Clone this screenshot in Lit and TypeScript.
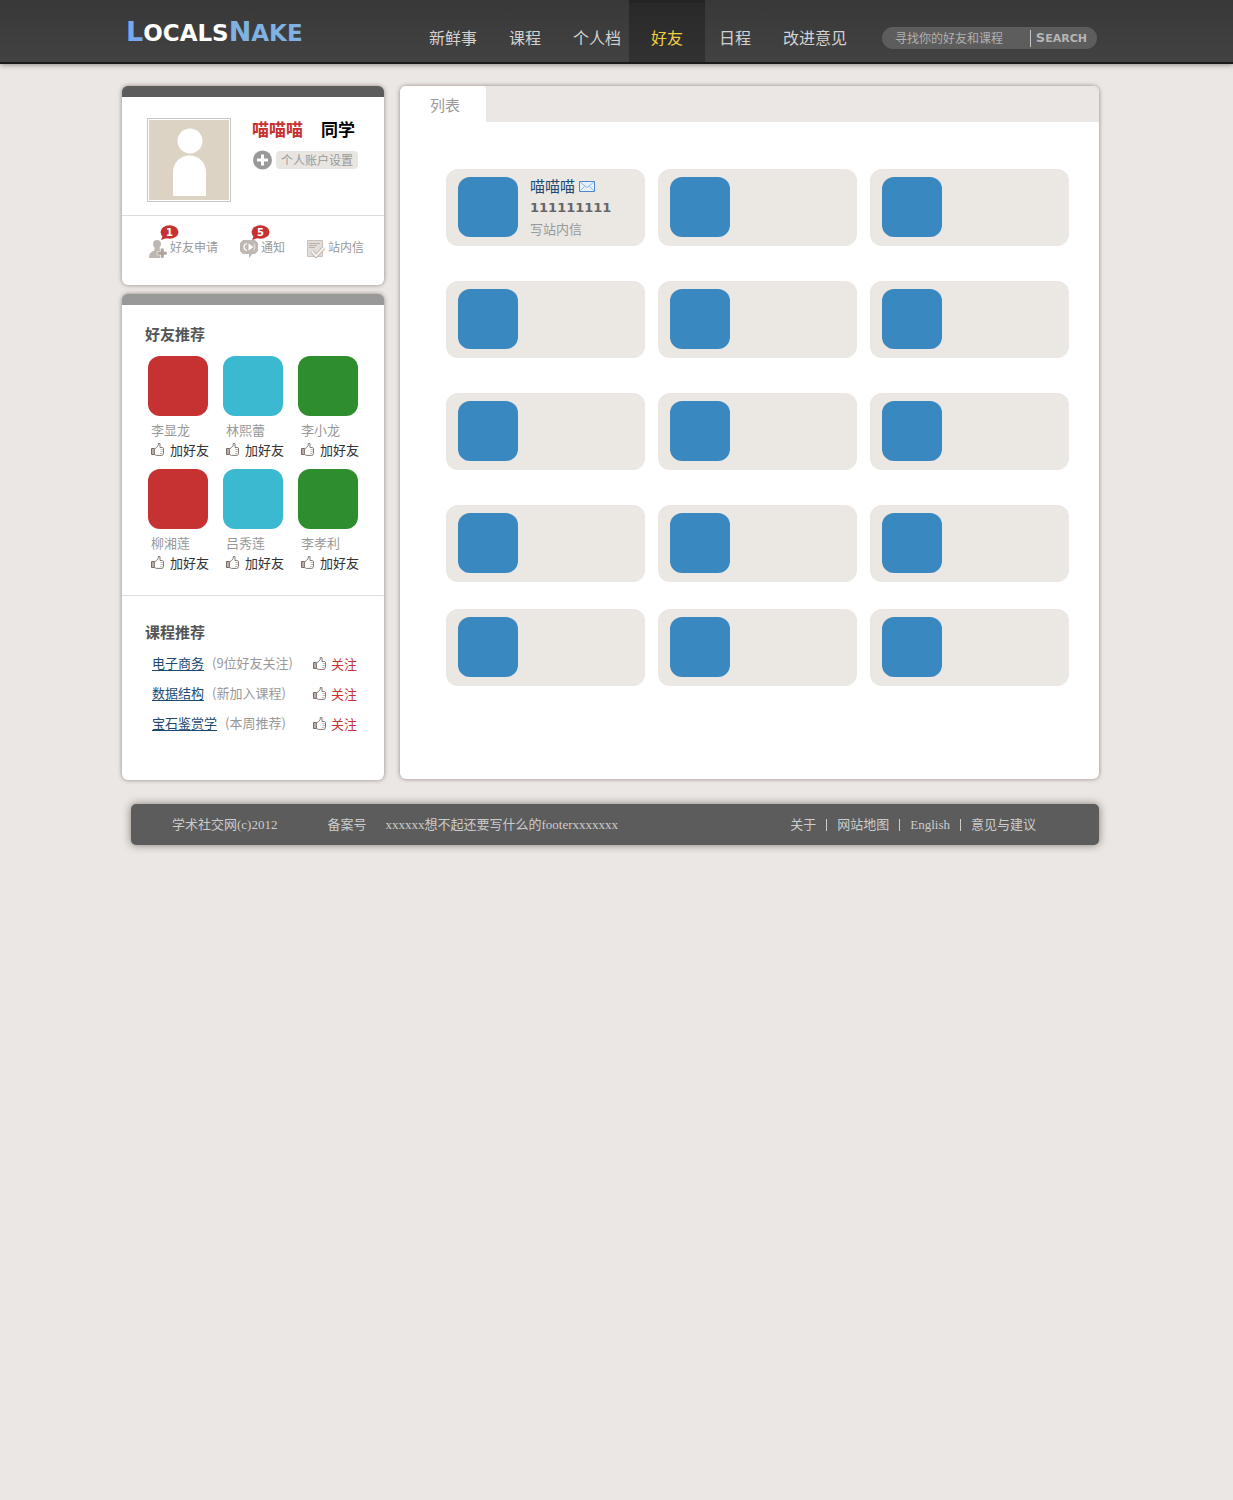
import { LitElement, html, css, svg } from "lit";
import { customElement } from "lit/decorators.js";
import { classMap } from "lit/directives/class-map.js";

const NAV = ["新鲜事", "课程", "个人档", "好友", "日程", "改进意见"];
const ACTIVE = "好友";

const SUGGESTED = [
  { name: "李显龙", tone: "red" },
  { name: "林熙蕾", tone: "cyan" },
  { name: "李小龙", tone: "green" },
  { name: "柳湘莲", tone: "red" },
  { name: "吕秀莲", tone: "cyan" },
  { name: "李孝利", tone: "green" },
];

const COURSES = [
  { name: "电子商务", note: "(9位好友关注)" },
  { name: "数据结构", note: "(新加入课程)" },
  { name: "宝石鉴赏学", note: "(本周推荐)" },
];

const FRIENDS = [
  { name: "喵喵喵", number: "111111111" },
  ...Array.from({ length: 14 }, () => null),
];

const FOOTER_LINKS = ["关于", "网站地图", "English", "意见与建议"];

const thumb = html`<svg class="thumb" width="13" height="13" viewBox="0 0 13 13" aria-hidden="true">
  <path d="M.5 5.500h3v6h-3z" fill="#b9aea8" stroke="#776c68" />
  <path d="M3.500 6 5.500 4.600 7.200 2.500V.6h1.800v3.900h2.600q1 .3.9 1.400v4.600q-.2 1.600-1.600 1.900H5.400L3.500 11.500z" fill="#fff" stroke="#857a75" />
  <path d="M9.500 6.500H12M9.500 8.500H12M9 10.500h2.500" stroke="#c4bcb7" />
</svg>`;

const personIcon = svg`<g>
  <path d="M8 0a4 4 0 0 1 4 4c0 1.500-.8 2.500-1.300 3.500v2c2 .6 2 1 2 1v2.500H10V15h1v3H0c0-3 1-5 2.500-6S5.500 10.500 5.500 9.500v-2C4.600 6.500 4 5.500 4 4a4 4 0 0 1 4-4z" fill="#bfb8b2" />
  <path d="M11.500 8.200h3.500v3.300h3v3.500h-3V18h-3.500v-3H8.200v-3.500h3.300z" fill="#b0a69e" stroke="#fff" stroke-width=".5" />
</g>`;

const noticeIcon = svg`<g>
  <path d="M3 0h12l3 3v8l-3 3h-2.500L9 18v-4H3l-3-3V3z" fill="#bfb8b2" />
  <path d="M7 3.500C4.500 4 4 5.500 4 7s.5 3 3 3.500" fill="none" stroke="#fff" stroke-width="1.200" />
  <path d="M8.500 3.500 13.500 7l-5 3.500z" fill="#fff" />
  <path d="M14 3.500q2 3.500 0 7" fill="none" stroke="#e8e3df" />
</g>`;

const letterIcon = svg`<g>
  <path d="M.5.5h15v16H.5z" fill="#e2ddd9" stroke="#c9c2bc" />
  <path d="M2 3.500h11M2 5.500h8M2 7.500h6" stroke="#b9b2ac" />
  <path d="m5 11.500 4 4.500 8-8.500" fill="none" stroke="#bdb5ae" stroke-width="4" />
  <path d="m5 11.500 4 4.500 8-8.500" fill="none" stroke="#f4f1ee" stroke-width="2" />
</g>`;

const ALERTS = [
  { label: "好友申请", icon: personIcon, count: 1 },
  { label: "通知", icon: noticeIcon, count: 5 },
  { label: "站内信", icon: letterIcon, count: 0 },
];

@customElement("app-root")
export class AppRoot extends LitElement {
  static styles = css`
    :host {
      display: block;
      min-height: 100vh;
      background: #ebe7e4;
      color: #999;
      font: 13px/20px "Noto Sans CJK SC", sans-serif;
    }
    * { box-sizing: border-box; }
    a { color: inherit; text-decoration: none; }
    h2, p, ul { margin: 0; padding: 0; }
    ul { list-style: none; }
    button, input {
      margin: 0;
      padding: 0;
      border: 0;
      background: none;
      color: inherit;
      font: inherit;
      cursor: pointer;
    }
    svg { display: block; flex: none; }
    .wrap {
      max-width: 989px;
      margin: 0 auto;
      padding-right: 12px;
    }

    .top {
      background: linear-gradient(#383838, #424242);
      border-bottom: 2px solid #1c1a19;
      box-shadow: 0 1px 5px rgba(60, 45, 40, 0.5);
    }
    .bar { display: flex; height: 62px; }
    .logo {
      flex: 1;
      padding-left: 4px;
      font: bold 23px/64px "DejaVu Sans", sans-serif;
      color: #7fb2e0;
      white-space: nowrap;
    }
    .cap { font-size: 27px; }
    .pale { color: #fff; }
    .blue { color: #78a9ec; }
    .nav { display: flex; margin-right: 19px; }
    .tab {
      padding: 12px 16px 0;
      font-size: 16px;
      line-height: 50px;
      color: #d2d2d2;
      white-space: nowrap;
    }
    .tab.active {
      margin: 0 -2px 0 -8px;
      padding: 12px 22px 0;
      background: linear-gradient(#242424 3px, #292929 3px, #323232);
      color: #f0cf45;
    }
    .search {
      display: flex;
      align-items: center;
      width: 215px;
      height: 22px;
      margin: 27px 2px 0 0;
      padding: 0 10px 0 13px;
      border-radius: 11px;
      background: #5d5d5d;
      color: #b5b5b5;
    }
    .query {
      flex: 1;
      min-width: 0;
      height: 20px;
      font-size: 12px;
      cursor: text;
      outline: none;
    }
    .query::placeholder { color: #b0b0b0; opacity: 1; }
    .go {
      height: 17px;
      padding-left: 5px;
      border-left: 1px solid #c4c4c4;
      font: bold 11px/16px "DejaVu Sans", sans-serif;
    }
    .go-cap { font-size: 13px; }

    .columns {
      display: flex;
      align-items: flex-start;
      gap: 16px;
      margin-top: 22px;
    }
    .side {
      display: flex;
      flex: none;
      flex-direction: column;
      gap: 9px;
      width: 262px;
    }
    .panel {
      border-radius: 6px;
      background: #fff;
      box-shadow: 0 0 4px rgba(70, 50, 45, 0.55);
    }
    .card { border-top: 11px solid #5c5c5c; }
    .card.light { border-top-color: #999; }

    .profile {
      display: flex;
      gap: 21px;
      padding: 21px 0 13px 25px;
    }
    .photo {
      padding: 1px;
      border: 1px solid #c6c6c6;
    }
    .who {
      display: flex;
      gap: 18px;
      font-size: 17px;
      font-weight: bold;
      line-height: 22px;
      color: #000;
    }
    .me { color: #c63232; }
    .settings {
      display: flex;
      align-items: center;
      gap: 4px;
      margin-top: 10px;
      font-size: 12px;
    }
    .settings-button {
      height: 18px;
      padding: 0 5px;
      border-radius: 4px;
      background: #e9e6e2;
      line-height: 18px;
      white-space: nowrap;
    }
    .alerts {
      display: flex;
      gap: 22px;
      padding: 22px 0 27px 27px;
      border-top: 1px solid #dcdcdc;
      font-size: 12px;
      line-height: 18px;
    }
    .alert {
      position: relative;
      display: flex;
      gap: 3px;
      white-space: nowrap;
    }
    .alert-icon { margin-top: 2px; }
    .badge {
      position: absolute;
      left: 11px;
      top: -13px;
    }
    .badge-text {
      font: bold 10px "DejaVu Sans", sans-serif;
      fill: #fff;
      text-anchor: middle;
    }

    .block { padding: 18px 0 0 23px; }
    .title {
      font-size: 15px;
      font-weight: bold;
      line-height: 22px;
      color: #555;
    }
    .people {
      display: grid;
      grid-template-columns: repeat(3, 60px);
      gap: 10px 15px;
      padding: 11px 0 23px 3px;
    }
    .person { white-space: nowrap; }
    .swatch {
      width: 60px;
      height: 60px;
      border-radius: 12px;
      background: #3a88c0;
    }
    .red { background: #c63232; }
    .cyan { background: #3ab9d0; }
    .green { background: #2e8e2e; }
    .person-name { padding: 4px 0 0 3px; }
    .action {
      display: flex;
      align-items: center;
      gap: 6px;
      line-height: 19px;
      white-space: nowrap;
    }
    .add { margin-left: 3px; color: #333; }
    .courses-block {
      padding-top: 25px;
      border-top: 1px solid #dcdfdf;
    }
    .courses { padding: 5px 27px 42px 7px; }
    .course {
      display: flex;
      align-items: center;
      height: 30px;
      gap: 8px;
      white-space: nowrap;
    }
    .course-link {
      color: #1c4a72;
      text-decoration: underline;
      text-underline-offset: 2px;
    }
    .note { flex: 1; }
    .follow { gap: 5px; color: #c63232; }

    .frame {
      flex: 1;
      min-width: 0;
    }
    .strip {
      display: flex;
      border-radius: 6px 6px 0 0;
      background: #ebe7e4;
    }
    .list-tab {
      padding: 2px 26px 0 30px;
      border-radius: 6px 4px 0 0;
      background: #fff;
      font-size: 15px;
      line-height: 34px;
    }
    .friends {
      display: grid;
      grid-template-columns: repeat(3, 1fr);
      gap: 35px 13px;
      padding: 47px 30px 93px 46px;
    }
    .friend {
      display: flex;
      gap: 12px;
      height: 77px;
      padding: 8px 12px;
      border-radius: 12px;
      background: #ebe7e3;
    }
    .friend:nth-last-child(-n + 3) { margin-top: -8px; }
    .friend-name {
      display: flex;
      align-items: center;
      gap: 4px;
      font-size: 15px;
      line-height: 18px;
      color: #1c4a72;
    }
    .number {
      font: bold 13px/26px "DejaVu Sans", sans-serif;
      color: #666;
    }
    .write { display: block; line-height: 16px; }

    .footer {
      display: flex;
      margin: 24px 0 0 9px;
      padding: 0 63px 0 41px;
      border-radius: 5px;
      background: #5c5c5c;
      box-shadow: 0 0 8px rgba(60, 50, 40, 0.6);
      font-family: "Liberation Serif", "Noto Sans CJK SC", serif;
      line-height: 41px;
      color: #ccc;
      white-space: nowrap;
    }
    .record { margin: 0 19px 0 50px; }
    .remark { flex: 1; }
    .links {
      display: flex;
      align-items: center;
    }
    .links-item { display: flex; align-items: center; }
    .links-item + .links-item::before {
      width: 1px;
      height: 12px;
      margin: 0 10px;
      background: #ccc;
      content: "";
    }
  `;

  private renderHeader() {
    return html`<header class="top">
      <div class="wrap bar">
        <a class="logo" href="#"
          ><span class="cap blue">L</span><span class="pale">OCALS</span><span class="cap">N</span>AKE</a
        >
        <nav class="nav">
          ${NAV.map(
            (item) =>
              html`<a class=${classMap({ tab: true, active: item === ACTIVE })} href="#">${item}</a>`
          )}
        </nav>
        <form class="search" role="search" @submit=${(e: Event) => e.preventDefault()}>
          <input class="query" type="text" aria-label="寻找你的好友和课程" placeholder="寻找你的好友和课程" />
          <button class="go" type="submit"><span class="go-cap">S</span>EARCH</button>
        </form>
      </div>
    </header>`;
  }

  private renderProfile() {
    return html`<section class="panel card">
      <div class="profile">
        <div class="photo">
          <svg width="80" height="80" viewBox="0 0 80 80" aria-hidden="true">
            <path d="M0 0h80v80H0z" fill="#ddd3c4" />
            <circle cx="41" cy="21" r="12.500" fill="#fff" />
            <path d="M24 76V52a16.500 16.500 0 0 1 33 0v24z" fill="#fff" />
          </svg>
        </div>
        <div>
          <p class="who"><span class="me">喵喵喵</span><span>同学</span></p>
          <div class="settings">
            <svg width="20" height="20" viewBox="0 0 20 20" aria-hidden="true">
              <circle cx="10.500" cy="10" r="9.500" fill="#999" />
              <path d="M10.500 4.500v11M5 10h11" stroke="#fff" stroke-width="3" />
            </svg>
            <button class="settings-button" type="button">个人账户设置</button>
          </div>
        </div>
      </div>
      <div class="alerts">
        ${ALERTS.map(
          (a) => html`<a class="alert" href="#">
            <svg class="alert-icon" width="18" height="18" viewBox="0 0 18 18" aria-hidden="true">${a.icon}</svg>
            ${a.label}
            ${a.count
              ? html`<svg class="badge" width="19" height="16" viewBox="0 0 19 16">
                  <ellipse cx="9.500" cy="7" rx="9" ry="6.700" fill="#c63232" />
                  <path d="M3 10 1 15l6-2z" fill="#c63232" />
                  <text class="badge-text" x="9.500" y="11">${a.count}</text>
                </svg>`
              : ""}
          </a>`
        )}
      </div>
    </section>`;
  }

  private renderSuggestions() {
    return html`<section class="panel card light">
      <div class="block">
        <h2 class="title">好友推荐</h2>
        <ul class="people">
          ${SUGGESTED.map(
            (p) => html`<li class="person">
              <div class="swatch ${p.tone}"></div>
              <p class="person-name">${p.name}</p>
              <button class="action add" type="button">${thumb}加好友</button>
            </li>`
          )}
        </ul>
      </div>
      <div class="block courses-block">
        <h2 class="title">课程推荐</h2>
        <ul class="courses">
          ${COURSES.map(
            (c) => html`<li class="course">
              <a class="course-link" href="#">${c.name}</a>
              <span class="note">${c.note}</span>
              <button class="action follow" type="button">${thumb}关注</button>
            </li>`
          )}
        </ul>
      </div>
    </section>`;
  }

  private renderFriends() {
    return html`<main class="panel frame">
      <div class="strip"><a class="list-tab" href="#">列表</a></div>
      <ul class="friends">
        ${FRIENDS.map(
          (f) => html`<li class="friend">
            <div class="swatch"></div>
            ${f
              ? html`<div>
                  <a class="friend-name" href="#"
                    >${f.name}
                    <svg width="16" height="11" viewBox="0 0 16 11" aria-hidden="true">
                      <path d="M.5.5h15v10H.5z" fill="#e6f1fc" stroke="#4f86cc" />
                      <path d="m1.500 1.500 6.500 5 6.500-5M1.500 9.500l4-4M14.500 9.500l-4-4" fill="none" stroke="#8db6e6" />
                    </svg>
                  </a>
                  <p class="number">${f.number}</p>
                  <a class="write" href="#">写站内信</a>
                </div>`
              : ""}
          </li>`
        )}
      </ul>
    </main>`;
  }

  render() {
    return html`
      ${this.renderHeader()}
      <div class="wrap">
        <div class="columns">
          <aside class="side">${this.renderProfile()}${this.renderSuggestions()}</aside>
          ${this.renderFriends()}
        </div>
        <footer class="footer">
          <span>学术社交网(c)2012</span>
          <span class="record">备案号</span>
          <span class="remark">xxxxxx想不起还要写什么的footerxxxxxxx</span>
          <nav class="links">
            ${FOOTER_LINKS.map((l) => html`<span class="links-item"><a href="#">${l}</a></span>`)}
          </nav>
        </footer>
      </div>
    `;
  }
}
